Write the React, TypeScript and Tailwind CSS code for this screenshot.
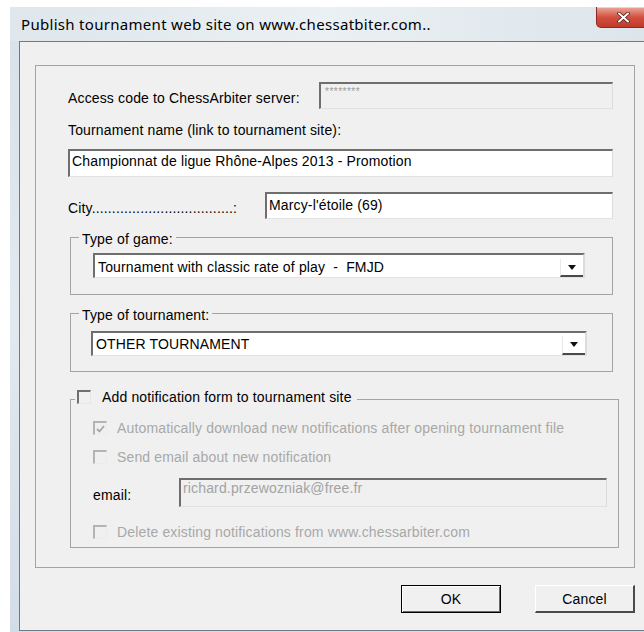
import type { ReactNode } from 'react';

// classic 3D sunken edge used by edit boxes and combo boxes
const sunken =
  'border-t-2 border-l-2 border-r border-b border-t-[#6e6e6e] border-l-[#6e6e6e] border-r-[#dcdcdc] border-b-[#e2e2e2]';

function TextBox({
  value,
  disabled = false,
  className = '',
}: {
  value: string;
  disabled?: boolean;
  className?: string;
}) {
  return (
    <div
      className={[
        'flex items-start px-[2px] leading-4',
        sunken,
        disabled ? 'bg-[#f0f0f0] text-[#a3a3a3]' : 'bg-white text-black',
        className,
      ].join(' ')}
    >
      {value}
    </div>
  );
}

function ComboBox({ value, className = '' }: { value: string; className?: string }) {
  return (
    <div className={`flex h-[25px] bg-white ${sunken} border-r-2 border-r-[#4a4a4a] ${className}`}>
      <span className="flex-1 whitespace-pre pl-[3px] leading-4">{value}</span>
      <span className="flex w-[23px] items-center justify-center border-b-2 border-l border-b-[#4a4a4a] border-l-[#e8e8e8] bg-white">
        <svg width="8" height="5" viewBox="0 0 8 5">
          <path d="M0 0h8L4 5z" fill="#111" />
        </svg>
      </span>
    </div>
  );
}

function CheckBox({ checked = false, disabled = false }: { checked?: boolean; disabled?: boolean }) {
  return (
    <span
      className={[
        'flex h-[14px] w-[14px] shrink-0 items-center justify-center border-t-2 border-l-2 border-r border-b',
        disabled
          ? 'border-t-[#b4b4b4] border-l-[#b4b4b4] border-r-[#ececec] border-b-[#ececec]'
          : 'border-t-[#707070] border-l-[#707070] border-r-[#e6e6e6] border-b-[#e6e6e6]',
      ].join(' ')}
    >
      {checked ? (
        <svg width="9" height="8" viewBox="0 0 9 8">
          <path d="M1 4l2.5 2.5L8 1" stroke="#a6a6a6" strokeWidth="1.8" fill="none" />
        </svg>
      ) : null}
    </span>
  );
}

function GroupBox({
  legend,
  legendClass,
  className = '',
  children,
}: {
  legend: ReactNode;
  legendClass: string;
  className?: string;
  children: ReactNode;
}) {
  return (
    <div className={`relative border border-[#a4a4a4] ${className}`}>
      <div className={`absolute flex items-center bg-[#f0f0f0] leading-4 ${legendClass}`}>{legend}</div>
      {children}
    </div>
  );
}

function CheckRow({ label, checked = false }: { label: string; checked?: boolean }) {
  return (
    <div className="flex h-4 items-center gap-[10px] text-[#a8a8a8]">
      <CheckBox checked={checked} disabled />
      <span>{label}</span>
    </div>
  );
}

export default function App() {
  return (
    <div className="h-[632px] w-[644px] overflow-hidden bg-white font-['Liberation_Sans',Arial,sans-serif] text-[14px] tracking-[0.15px] text-black">
      <div className="ml-[10px] mt-[7px] h-[625px] w-[634px] bg-gradient-to-b from-[#d8e1e9] via-[#e2e9ef] to-[#d3dde6]">
        {/* caption */}
        <div className="relative flex h-[34px] items-center bg-gradient-to-r from-[#dfe6ec] via-[#eaf0f3] to-[#dde5eb] pl-[11px]">
          <span className="font-['Noto_Sans',sans-serif] text-[15px] leading-5 tracking-[0.3px] text-black">
            Publish tournament web site on www.chessatbiter.com..
          </span>
          <div className="absolute right-[-6px] top-0 flex h-[21px] w-[54px] items-center justify-center rounded-bl-[5px] border border-t-0 border-[#8a2a22] bg-gradient-to-b from-[#e9a99d] via-[#d2503e] to-[#c0392b] shadow-[inset_0_1px_0_rgba(255,255,255,0.5)]">
            <svg width="13" height="11" viewBox="0 0 13 11">
              <path d="M2 1.5l9 8M11 1.5l-9 8" stroke="#5a1a14" strokeWidth="3.6" strokeLinecap="round" />
              <path d="M2 1.5l9 8M11 1.5l-9 8" stroke="#fff" strokeWidth="2" strokeLinecap="round" />
            </svg>
          </div>
        </div>

        {/* client area */}
        <div className="ml-[9px] flex h-[590px] flex-col border-b border-l border-t border-[#6f7a84] bg-[#f0f0f0] pl-[15px] pr-[9px] pt-[23px]">
          <div className="flex h-[503px] flex-col border border-[#a4a4a4] pl-8 pr-[21px] pt-4">
            <div className="flex h-[27px] items-start">
              <span className="mt-[8px] leading-4">Access code to ChessArbiter server:</span>
              <div
                className={`ml-auto h-[27px] w-[294px] bg-[#f0f0f0] pl-[4px] pt-[2px] text-[10px] leading-3 tracking-[0.5px] text-[#9a9a9a] ${sunken}`}
              >
                ********
              </div>
            </div>

            <span className="mt-[13px] h-4 leading-4">Tournament name (link to tournament site):</span>
            <TextBox value="Championnat de ligue Rhône-Alpes 2013 - Promotion" className="mt-[11px] h-[28px] pt-[2px]" />

            <div className="mt-[15px] flex h-[27px] items-start">
              <span className="mt-[8px] leading-4">City...................................:</span>
              <TextBox value="Marcy-l'étoile (69)" className="ml-auto h-[27px] w-[348px] pt-[3px]" />
            </div>

            <GroupBox
              legend="Type of game:"
              legendClass="-top-[7px] left-[8px] px-[3px]"
              className="ml-[2px] mt-[18px] h-[58px] pl-[22px] pt-[15px]"
            >
              <ComboBox value="Tournament with classic rate of play  -  FMJD" className="w-[492px] pt-[4px]" />
            </GroupBox>

            <GroupBox
              legend="Type of tournament:"
              legendClass="-top-[7px] left-[8px] px-[3px]"
              className="ml-[2px] mt-[18px] h-[59px] pl-[20px] pt-[17px]"
            >
              <ComboBox value="OTHER TOURNAMENT" className="w-[496px] pt-[3px]" />
            </GroupBox>

            <GroupBox
              legend={
                <>
                  <CheckBox />
                  <span className="ml-[11px]">Add notification form to tournament site</span>
                </>
              }
              legendClass="-top-[11px] left-[4px] px-[2px] pr-[5px]"
              className="ml-[2px] mt-[27px] flex h-[149px] w-[549px] flex-col pl-[22px] pt-[20px]"
            >
              <CheckRow checked label="Automatically download new notifications after opening tournament file" />
              <div className="mt-[13px]">
                <CheckRow label="Send email about new notification" />
              </div>
              <div className="mt-[13px] flex h-[29px] items-start">
                <span className="mt-[9px] w-[86px] leading-4">email:</span>
                <TextBox value="richard.przewozniak@free.fr" disabled className="h-[29px] w-[428px]" />
              </div>
              <div className="mt-[17px]">
                <CheckRow label="Delete existing notifications from www.chessarbiter.com" />
              </div>
            </GroupBox>
          </div>

          <div className="mt-[17px] flex justify-end gap-[34px]">
            <button
              type="button"
              className="flex h-[28px] w-[100px] items-center justify-center border border-black bg-[#f0f0f0] leading-4 shadow-[inset_1px_1px_0_#fff,inset_-1px_-1px_0_#6a6a6a]"
            >
              OK
            </button>
            <button
              type="button"
              className="flex h-[28px] w-[100px] items-center justify-center border-b-2 border-l border-r-2 border-t border-b-[#4a4a4a] border-l-[#fff] border-r-[#4a4a4a] border-t-[#fff] bg-[#f0f0f0] leading-4"
            >
              Cancel
            </button>
          </div>
        </div>
      </div>
    </div>
  );
}
